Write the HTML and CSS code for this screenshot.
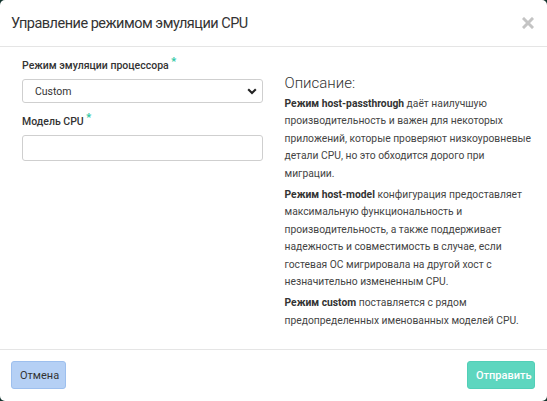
FILE: index.html
```html
<!DOCTYPE html>
<html lang="ru">
<head>
<meta charset="utf-8">
<title>Управление режимом эмуляции CPU</title>
<link rel="stylesheet" href="styles.css">
</head>
<body>
<div class="modal">
  <div class="modal-header">
    <h4 class="modal-title">Управление режимом эмуляции CPU</h4>
    <button class="close" type="button" aria-label="Закрыть">
      <svg width="12" height="12" viewBox="0 0 12 12"><path d="M2 2 L10 10 M10 2 L2 10" stroke="#c4c4c4" stroke-width="3" stroke-linecap="square"/></svg>
    </button>
  </div>
  <div class="modal-body">
    <div class="col col-form">
      <div class="form-group">
        <label class="label">Режим эмуляции процессора <span class="req">*</span></label>
        <div class="select">
          <span>Custom</span>
          <svg class="chevron" width="10" height="7" viewBox="0 0 10 7"><path d="M1.2 1.3 L5 5 L8.8 1.3" fill="none" stroke="#222" stroke-width="2.1"/></svg>
        </div>
      </div>
      <div class="form-group">
        <label class="label">Модель CPU <span class="req">*</span></label>
        <div class="input"></div>
      </div>
    </div>
    <div class="col col-desc">
      <h3 class="desc-title">Описание:</h3>
      <p><b>Режим host-passthrough</b> даёт наилучшую<br>производительность и важен для некоторых<br>приложений, которые проверяют низкоуровневые<br>детали CPU, но это обходится дорого при<br>миграции.</p>
      <p><b>Режим host-model</b> конфигурация предоставляет<br>максимальную функциональность и<br>производительность, а также поддерживает<br>надежность и совместимость в случае, если<br>гостевая ОС мигрировала на другой хост с<br>незначительно измененным CPU.</p>
      <p><b>Режим custom</b> поставляется с рядом<br>предопределенных именованных моделей CPU.</p>
    </div>
  </div>
  <div class="modal-footer">
    <button class="btn btn-cancel" type="button">Отмена</button>
    <button class="btn btn-submit" type="button">Отправить</button>
  </div>
</div>
</body>
</html>
```
FILE: styles.css
```css
html, body {
  margin: 0;
  padding: 0;
  background: #12332d;
}
body {
  font-family: Roboto, "Noto Sans", sans-serif;
  color: #333;
}
.modal {
  width: 547px;
  height: 401px;
  background: #fff;
  border-radius: 5px;
  display: flex;
  flex-direction: column;
  box-sizing: border-box;
}
.modal-header {
  height: 46px;
  border-bottom: 1px solid #e5e5e5;
  display: flex;
  align-items: center;
  justify-content: space-between;
  padding: 0 12px 0 11px;
}
.modal-title {
  margin: 0;
  font-size: 14.5px;
  font-weight: 400;
  color: #333;
  letter-spacing: -0.5px;
  padding-top: 1px;
}
.close {
  border: 0;
  background: none;
  padding: 0;
  width: 14px;
  height: 14px;
  display: flex;
  align-items: center;
  justify-content: center;
}
.modal-body {
  flex: 1;
  display: flex;
  padding: 0 11px;
}
.col {
  flex: 1 1 0;
  padding: 0 11px;
  min-width: 0;
}
.col-form {
  padding-top: 11px;
}
.form-group {
  margin-bottom: 11px;
}
.label {
  display: block;
  font-size: 10.5px;
  font-weight: 500;
  line-height: 16px;
  color: #333;
  margin-bottom: 5px;
}
.req {
  color: #2cc7a4;
  font-size: 11px;
  position: relative;
  top: -4px;
  font-weight: 700;
}
.select {
  height: 24px;
  box-sizing: border-box;
  border: 1px solid #cfcfcf;
  border-radius: 3px;
  display: flex;
  align-items: center;
  justify-content: space-between;
  padding: 0 5px 0 12px;
  font-size: 10.5px;
  color: #333;
}
.chevron {
  display: block;
}
.input {
  height: 26px;
  box-sizing: border-box;
  border: 1px solid #cfcfcf;
  border-radius: 3px;
}
.col-desc {
  padding-top: 26px;
}
.desc-title {
  margin: 0 0 2px;
  font-size: 15px;
  font-weight: 300;
  color: #333;
  line-height: 20px;
}
.col-desc p {
  margin: 0 0 4px;
  font-size: 10.3px;
  line-height: 17.4px;
  color: #444;
  white-space: nowrap;
}
.col-desc b {
  font-weight: 700;
  color: #333;
}
.modal-footer {
  height: 52px;
  border-top: 1px solid #e5e5e5;
  display: flex;
  align-items: flex-start;
  justify-content: space-between;
  padding: 11px 12px 0 11px;
  box-sizing: border-box;
}
.btn {
  height: 28px;
  border-radius: 3px;
  font-family: Roboto, "Noto Sans", sans-serif;
  font-size: 11px;
  padding: 0 8px;
  cursor: pointer;
}
.btn-cancel {
  width: 55px;
  background: #b5d0f5;
  border: 1px solid #9dbfee;
  color: #333;
}
.btn-submit {
  width: 68px;
  background: #5dd6bf;
  border: 1px solid #52cfb7;
  color: #fff;
  font-weight: 500;
}
```
